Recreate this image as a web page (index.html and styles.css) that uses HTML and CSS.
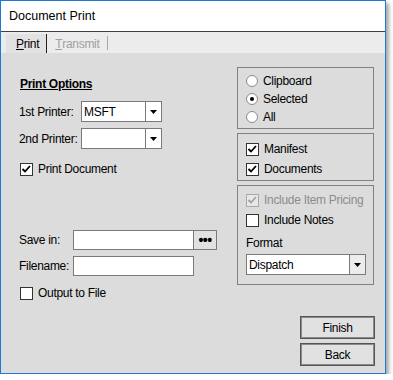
FILE: index.html
```html
<!DOCTYPE html>
<html lang="en">
<head>
  <meta charset="UTF-8">
  <title>Document Print</title>
  <link rel="stylesheet" href="styles.css">
</head>
<body>
  <div class="window">
    <div class="titlebar">Document Print</div>

    <div class="tabs">
      <div class="tab tab-active"><u>P</u>rint</div>
      <div class="tab tab-disabled"><u>T</u>ransmit</div>
      <div class="tab-sep"></div>
    </div>

    <div class="content">
      <div class="left">
        <div class="heading">Print Options</div>

        <div class="field-row row-printer1">
          <span class="label label-printer">1st Printer:</span>
          <div class="combo combo-printer">
            <span class="combo-value">MSFT</span>
            <span class="combo-button"><svg width="7" height="4" viewBox="0 0 7 4"><polygon points="0,0 7,0 3.5,4" fill="#000"/></svg></span>
          </div>
        </div>

        <div class="field-row row-printer2">
          <span class="label label-printer">2nd Printer:</span>
          <div class="combo combo-printer">
            <span class="combo-value"></span>
            <span class="combo-button"><svg width="7" height="4" viewBox="0 0 7 4"><polygon points="0,0 7,0 3.5,4" fill="#000"/></svg></span>
          </div>
        </div>

        <div class="check-row row-print-doc">
          <span class="checkbox"><svg width="11" height="11" viewBox="0 0 11 11"><polyline points="1.5,5 4,7.5 9,2" fill="none" stroke="#000" stroke-width="1.8"/></svg></span>
          Print Document
        </div>

        <div class="field-row row-save">
          <span class="label label-file">Save in:</span>
          <div class="input"></div>
          <div class="browse">&bull;&bull;&bull;</div>
        </div>

        <div class="field-row row-filename">
          <span class="label label-file">Filename:</span>
          <div class="input"></div>
        </div>

        <div class="check-row row-output">
          <span class="checkbox"></span>
          Output to File
        </div>
      </div>

      <div class="right">
        <div class="panel panel-source">
          <div class="option-row"><span class="radio"></span>Clipboard</div>
          <div class="option-row"><span class="radio radio-on"></span>Selected</div>
          <div class="option-row"><span class="radio"></span>All</div>
        </div>

        <div class="panel panel-parts">
          <div class="check-row part-row">
            <span class="checkbox"><svg width="11" height="11" viewBox="0 0 11 11"><polyline points="1.5,5 4,7.5 9,2" fill="none" stroke="#000" stroke-width="1.8"/></svg></span>
            Manifest
          </div>
          <div class="check-row part-row">
            <span class="checkbox"><svg width="11" height="11" viewBox="0 0 11 11"><polyline points="1.5,5 4,7.5 9,2" fill="none" stroke="#000" stroke-width="1.8"/></svg></span>
            Documents
          </div>
        </div>

        <div class="panel panel-format">
          <div class="check-row part-row disabled">
            <span class="checkbox checkbox-disabled"><svg width="11" height="11" viewBox="0 0 11 11"><polyline points="1.5,5 4,7.5 9,2" fill="none" stroke="#a2a2a2" stroke-width="1.8"/></svg></span>
            Include Item Pricing
          </div>
          <div class="check-row part-row">
            <span class="checkbox"></span>
            Include Notes
          </div>
          <div class="format-label">Format</div>
          <div class="combo combo-format">
            <span class="combo-value">Dispatch</span>
            <span class="combo-button combo-button-gray"><svg width="7" height="4" viewBox="0 0 7 4"><polygon points="0,0 7,0 3.5,4" fill="#000"/></svg></span>
          </div>
        </div>

        <div class="buttons">
          <div class="button">Finish</div>
          <div class="button button-back">Back</div>
        </div>
      </div>
    </div>
  </div>
</body>
</html>
```

FILE: styles.css
```css
body {
  margin: 0;
  background-color: #fff;
  font-family: "Liberation Sans", Arial, sans-serif;
  font-size: 12px;
  letter-spacing: -0.3px;
  color: #000;
}
.window {
  width: 384px;
  height: 372px;
  border: 1px solid #1c7ad4;
  box-shadow: 3px 3px 4px rgba(0,0,0,0.35);
  display: flex;
  flex-direction: column;
}
.titlebar {
  height: 30px;
  border-bottom: 1px solid #3f3f3f;
  background-color: #fff;
  padding-left: 8px;
  font-size: 12.5px;
  letter-spacing: 0;
  display: flex;
  align-items: center;
}
.tabs {
  height: 21px;
  background-color: #ececec;
  display: flex;
  align-items: stretch;
  padding-left: 5px;
}
.tab {
  display: flex;
  align-items: center;
}
.tab-active {
  margin-top: 2px;
  padding: 0 7px 0 10px;
  border-right: 1px solid #222;
  background-color: #e2e2e2;
}
.tab-disabled {
  color: #a0a0a0;
  padding: 0 8px;
  margin-top: 2px;
}
.tab-sep {
  width: 1px;
  height: 14px;
  margin-top: 4px;
  background-color: #a8a8a8;
}
.content {
  flex: 1;
  background-color: #dcdcdc;
  display: flex;
  padding-left: 18px;
}
.left {
  width: 218px;
  padding-top: 24px;
  display: flex;
  flex-direction: column;
}
.heading {
  font-weight: bold;
  text-decoration: underline;
  line-height: 14px;
  padding-left: 1px;
}
.field-row {
  display: flex;
  align-items: center;
}
.row-printer1 {
  margin-top: 10px;
}
.row-printer2 {
  margin-top: 6px;
}
.label-printer {
  width: 62px;
}
.label-file {
  width: 54px;
}
.combo {
  box-sizing: border-box;
  height: 21px;
  border: 1px solid #7a7a7a;
  background-color: #fff;
  display: flex;
}
.combo-printer {
  width: 81px;
}
.combo-value {
  flex: 1;
  padding-left: 2px;
  display: flex;
  align-items: center;
}
.combo-button {
  width: 15px;
  border-left: 1px solid #7a7a7a;
  display: flex;
  align-items: center;
  justify-content: center;
}
.combo-button-gray {
  background-color: #ececec;
}
.check-row {
  display: flex;
  align-items: center;
  line-height: 14px;
}
.checkbox {
  box-sizing: border-box;
  width: 13px;
  height: 13px;
  border: 1px solid #333;
  background-color: #fff;
  margin-right: 5px;
  flex-shrink: 0;
  display: flex;
}
.checkbox-disabled {
  border-color: #a8a8a8;
  background-color: #e8e8e8;
}
.disabled {
  color: #8c8c8c;
}
.row-print-doc {
  margin-top: 13px;
  padding-left: 1px;
}
.row-save {
  margin-top: 54px;
}
.row-filename {
  margin-top: 6px;
}
.row-output {
  margin-top: 10px;
  padding-left: 1px;
}
.input {
  box-sizing: border-box;
  width: 121px;
  height: 20px;
  border: 1px solid #7a7a7a;
  background-color: #fff;
}
.browse {
  box-sizing: border-box;
  width: 23px;
  height: 20px;
  border: 1px solid #7a7a7a;
  border-left: none;
  background-color: #e1e1e1;
  font-size: 14px;
  font-weight: bold;
  letter-spacing: -0.5px;
  display: flex;
  align-items: center;
  justify-content: center;
}
.right {
  width: 138px;
  padding-top: 14px;
  display: flex;
  flex-direction: column;
  align-items: flex-start;
}
.panel {
  box-sizing: border-box;
  width: 137px;
  border: 1px solid #808080;
  padding-left: 8px;
}
.panel-source {
  height: 62px;
  padding-top: 4px;
}
.option-row {
  height: 18px;
  display: flex;
  align-items: center;
}
.radio {
  box-sizing: border-box;
  width: 12px;
  height: 12px;
  border-radius: 50%;
  border: 1px solid #8a8a8a;
  background-color: #fff;
  margin-right: 5px;
  display: flex;
  align-items: center;
  justify-content: center;
}
.radio-on::after {
  content: "";
  width: 4px;
  height: 4px;
  border-radius: 50%;
  background-color: #000;
}
.panel-parts {
  height: 48px;
  margin-top: 4px;
  padding-top: 5px;
}
.part-row {
  height: 20px;
}
.panel-format {
  height: 100px;
  margin-top: 4px;
  padding-top: 4px;
}
.format-label {
  margin-top: 6px;
  line-height: 14px;
}
.combo-format {
  width: 120px;
  margin-top: 4px;
}
.buttons {
  align-self: flex-end;
  margin-top: 31px;
}
.button {
  box-sizing: border-box;
  width: 75px;
  height: 23px;
  border: 1px solid #555;
  box-shadow: inset 0 0 0 1px #8a8a8a;
  background-color: #e1e1e1;
  display: flex;
  align-items: center;
  justify-content: center;
}
.button-back {
  margin-top: 4px;
}
```
